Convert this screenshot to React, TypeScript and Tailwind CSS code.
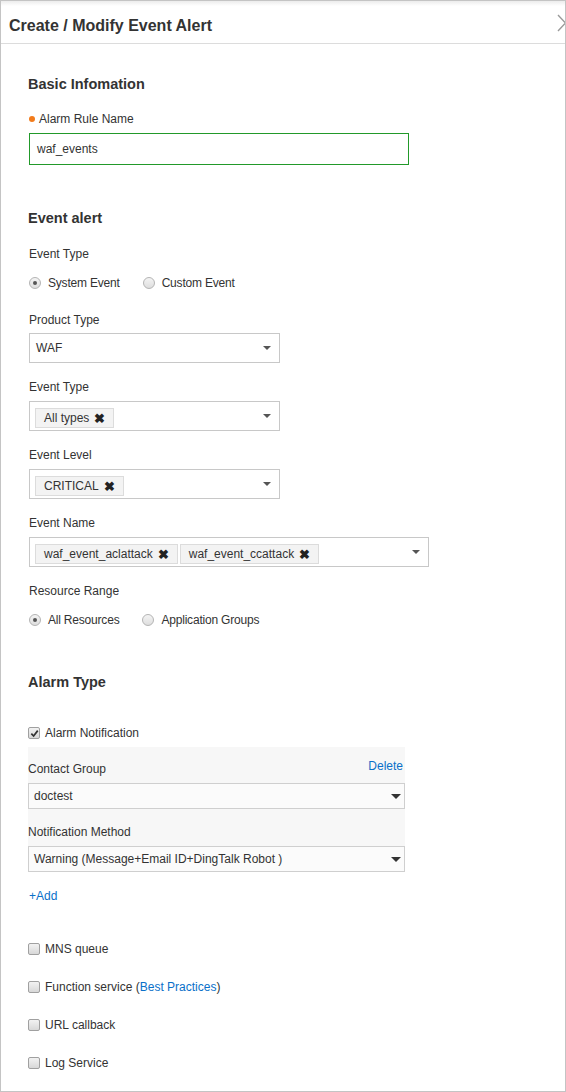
import type { ReactNode } from 'react';

const font = { fontFamily: '"Liberation Sans", Arial, sans-serif' };

function Heading({ children, className = '' }: { children: ReactNode; className?: string }) {
  return (
    <div className={`h-[20px] text-[14.5px] leading-[20px] font-bold text-[#333] ${className}`}>{children}</div>
  );
}

function Label({ children, className = '' }: { children: ReactNode; className?: string }) {
  return <div className={`h-[16px] text-[12px] leading-[16px] text-[#333] ${className}`}>{children}</div>;
}

function Radio({ checked, label }: { checked?: boolean; label: string }) {
  return (
    <span className="flex items-center gap-[7px]">
      <span className="flex h-[12px] w-[12px] items-center justify-center rounded-full border border-[#b4b4b4] bg-gradient-to-b from-[#f4f4f4] to-[#dedede]">
        {checked && <span className="h-[4px] w-[4px] rounded-full bg-[#555]" />}
      </span>
      <span className="text-[12px] leading-[16px] tracking-[-0.2px] text-[#333]">{label}</span>
    </span>
  );
}

function Checkbox({ checked, children }: { checked?: boolean; children: ReactNode }) {
  return (
    <div className="flex h-[16px] items-center gap-[5px]">
      <span className="flex h-[12px] w-[12px] items-center justify-center rounded-[2px] border border-[#a0a0a0] bg-gradient-to-b from-[#f2f2f2] to-[#d8d8d8]">
        {checked && (
          <svg viewBox="0 0 10 10" className="h-[9px] w-[9px]">
            <path d="M1.5 5.2 L4 7.8 L8.6 1.8" fill="none" stroke="#333" strokeWidth="1.9" />
          </svg>
        )}
      </span>
      <span className="text-[12px] leading-[16px] text-[#333]">{children}</span>
    </div>
  );
}

function Caret() {
  return (
    <svg viewBox="0 0 8 4" className="h-[4px] w-[8px]">
      <path d="M0 0 L8 0 L4 4 Z" fill="#555" />
    </svg>
  );
}

function Tag({ children }: { children: ReactNode }) {
  return (
    <span className="flex h-[20px] items-center gap-[5px] border border-[#dcdcdc] bg-[#f3f3f3] pl-[8px] pr-[8px] text-[12px] text-[#333]">
      {children}
      <span className="text-[13px] leading-none font-bold text-[#222]">✖</span>
    </span>
  );
}

function Select({ value, width }: { value: string; width: string }) {
  return (
    <div className={`ml-[1px] mt-[5px] flex h-[30px] ${width} items-center justify-between border border-[#c8c8c8] bg-white pl-[6px] pr-[8px]`}>
      <span className="text-[12px] text-[#333]">{value}</span>
      <Caret />
    </div>
  );
}

function MultiSelect({ tags, width }: { tags: string[]; width: string }) {
  return (
    <div className={`ml-[1px] mt-[6px] flex h-[30px] ${width} items-start justify-between border border-[#c8c8c8] bg-white pl-[5px] pr-[8px] pt-[6px]`}>
      <div className="flex gap-[2px]">
        {tags.map((t) => (
          <Tag key={t}>{t}</Tag>
        ))}
      </div>
      <span className="mt-[6px]">
        <Caret />
      </span>
    </div>
  );
}

function DarkSelect({ value }: { value: string }) {
  return (
    <div className="mt-[6px] flex h-[26px] w-full items-center justify-between border border-[#cfcfcf] bg-[#fbfbfb] pl-[5px] pr-[3px]">
      <span className="text-[12px] text-[#333]">{value}</span>
      <svg viewBox="0 0 10 5" className="h-[5px] w-[10px]">
        <path d="M0 0 L10 0 L5 5 Z" fill="#333" />
      </svg>
    </div>
  );
}

export default function App() {
  return (
    <div style={font} className="box-border flex h-[1092px] w-[566px] flex-col overflow-hidden border border-[#c4c4c4] bg-white">
      <div className="h-[5px] bg-gradient-to-b from-[#ececec] to-white" />
      <header className="flex h-[38px] items-center justify-between border-b border-[#dcdcdc] pl-[8px] pt-[2px]">
        <h1 className="text-[16px] font-bold text-[#333]">Create / Modify Event Alert</h1>
        <svg viewBox="0 0 10 18" className="mr-[-2px] mt-[-6px] h-[18px] w-[10px]">
          <path d="M1 1 L8.5 9 L1 17" fill="none" stroke="#9a9a9a" strokeWidth="1.4" />
        </svg>
      </header>

      <main className="flex flex-col pl-[27px]">
        <Heading className="mt-[30px]">Basic Infomation</Heading>
        <Label className="mt-[17px] flex items-center gap-[4px] pl-[1px]">
          <span className="h-[6px] w-[6px] rounded-full bg-[#f27b1b]" />
          Alarm Rule Name
        </Label>
        <div className="ml-[1px] mt-[6px] flex h-[32px] w-[380px] items-center border border-[#22992a] pl-[7px] text-[12px] text-[#333]">
          waf_events
        </div>

        <Heading className="mt-[43px]">Event alert</Heading>
        <Label className="mt-[18px] pl-[1px]">Event Type</Label>
        <div className="mt-[13px] flex gap-[23px] pl-[1px]">
          <Radio checked label="System Event" />
          <Radio label="Custom Event" />
        </div>

        <Label className="mt-[21px] pl-[1px]">Product Type</Label>
        <Select value="WAF" width="w-[251px]" />

        <Label className="mt-[16px] pl-[1px]">Event Type</Label>
        <MultiSelect tags={['All types']} width="w-[251px]" />

        <Label className="mt-[16px] pl-[1px]">Event Level</Label>
        <MultiSelect tags={['CRITICAL']} width="w-[251px]" />

        <Label className="mt-[16px] pl-[1px]">Event Name</Label>
        <MultiSelect tags={['waf_event_aclattack', 'waf_event_ccattack']} width="w-[400px]" />

        <Label className="mt-[16px] pl-[1px]">Resource Range</Label>
        <div className="mt-[13px] flex gap-[23px] pl-[1px]">
          <Radio checked label="All Resources" />
          <Radio label="Application Groups" />
        </div>

        <Heading className="mt-[44px]">Alarm Type</Heading>
        <div className="mt-[33px]">
          <Checkbox checked>Alarm Notification</Checkbox>
        </div>

        <div className="mt-[6px] flex w-[377px] flex-col bg-[#f7f7f7] pt-[14px]">
          <div className="flex h-[16px] items-center justify-between text-[12px]">
            <span className="text-[#333]">Contact Group</span>
            <span className="mt-[-6px] pr-[2px] text-[#0a70c9]">Delete</span>
          </div>
          <DarkSelect value="doctest" />
          <Label className="mt-[15px]">Notification Method</Label>
          <DarkSelect value="Warning (Message+Email ID+DingTalk Robot )" />
        </div>

        <div className="mt-[16px] h-[16px] pl-[1px] text-[12px] leading-[16px] text-[#0a70c9]">+Add</div>

        <div className="mt-[37px] flex flex-col gap-[22px]">
          <Checkbox>MNS queue</Checkbox>
          <Checkbox>
            Function service (<span className="text-[#0a70c9]">Best Practices</span>)
          </Checkbox>
          <Checkbox>URL callback</Checkbox>
          <Checkbox>Log Service</Checkbox>
        </div>
      </main>
    </div>
  );
}
